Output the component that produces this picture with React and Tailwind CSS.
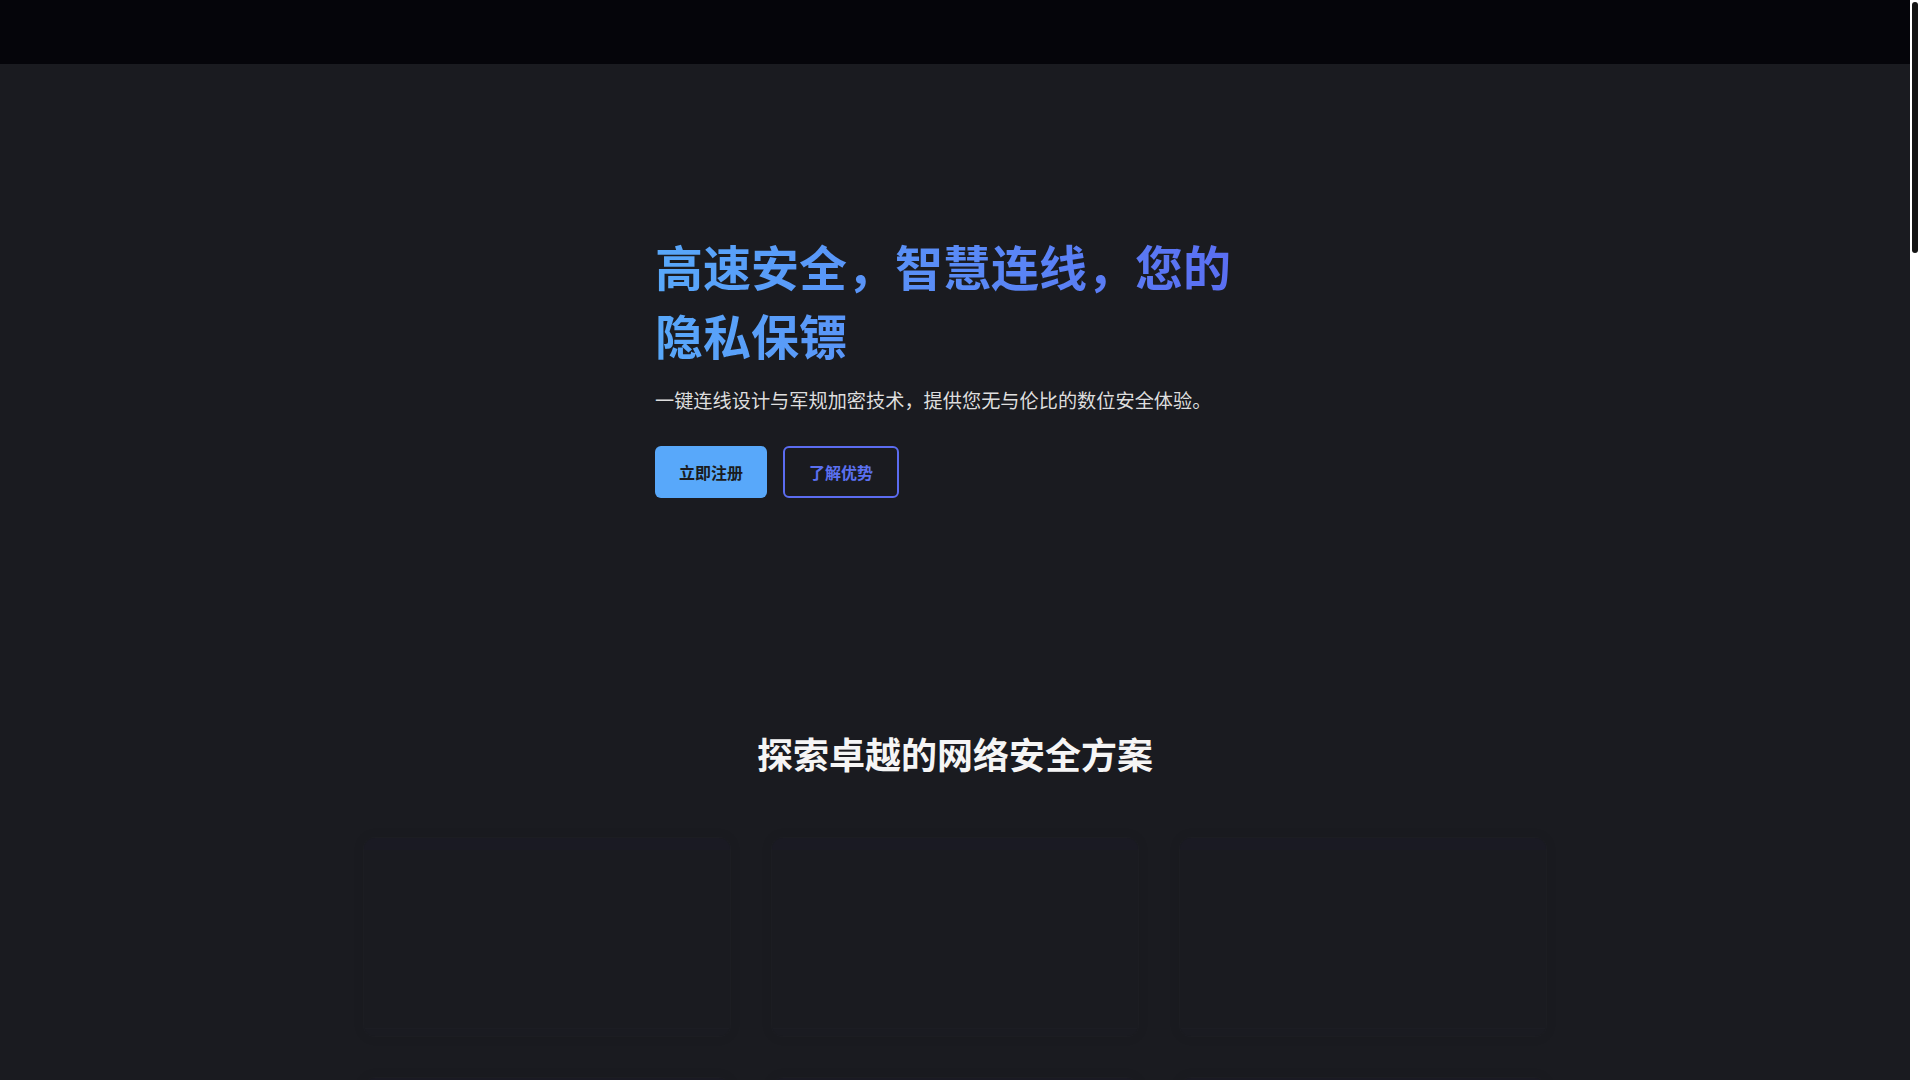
import { ShieldCheck, Zap, Globe, Lock, Server, Smartphone, Check } from 'lucide-react'

const features = [
  { icon: Zap, title: '极速连接', desc: '智能选路与专线加速，毫秒级响应，告别卡顿与延迟。' },
  { icon: ShieldCheck, title: '军规加密', desc: '采用 AES-256 加密协议，全程守护您的每一笔数据。' },
  { icon: Globe, title: '全球节点', desc: '覆盖 60+ 国家与地区，随时随地稳定访问全球内容。' },
  { icon: Lock, title: '零日志政策', desc: '我们从不记录您的浏览行为，隐私只属于您自己。' },
  { icon: Server, title: '专属服务器', desc: '高性能独享带宽，高峰时段依然畅快无阻。' },
  { icon: Smartphone, title: '多端同步', desc: '一个账号支持手机、电脑、平板等多台设备同时使用。' },
]

const plans = [
  { name: '月付', price: '¥39', period: '/月', perks: ['全部节点', '5 台设备', '7×24 客服'] },
  { name: '年付', price: '¥299', period: '/年', perks: ['全部节点', '10 台设备', '专属线路', '7×24 客服'] },
  { name: '季付', price: '¥99', period: '/季', perks: ['全部节点', '5 台设备', '7×24 客服'] },
]

const faqs = [
  { q: '如何开始使用？', a: '注册账号并选择套餐后，下载客户端即可一键连线。' },
  { q: '支持哪些设备？', a: '支持 Windows、macOS、iOS、Android 及 Linux。' },
  { q: '可以退款吗？', a: '首次购买 7 天内不满意可申请全额退款。' },
  { q: '是否记录我的数据？', a: '我们严格执行零日志政策，不保存任何浏览记录。' },
  { q: '遇到问题怎么办？', a: '7×24 小时在线客服随时为您解答。' },
]

function FeatureCard({ icon: Icon, title, desc }) {
  return (
    <div className="h-[200px] rounded-xl border border-white/[0.012] bg-[#1a1b20] shadow-[0_0_12px_rgba(0,0,0,0.08)] overflow-hidden flex flex-col">
      <div className="h-[12px] bg-[#1a1a23]" />
      {/* content fades in on scroll */}
      <div className="flex-1 px-6 py-5 invisible">
        <Icon className="w-8 h-8 text-[#58a6ff] mb-3" />
        <h3 className="text-xl font-bold text-white mb-2">{title}</h3>
        <p className="text-sm text-gray-400 leading-6">{desc}</p>
      </div>
      <div className="h-[8px] border-t border-white/[0.012] bg-[#1a1b21]" />
    </div>
  )
}

export default function App() {
  return (
    <div className="flex h-screen bg-[#1a1b20] font-['Noto_Sans_CJK_SC','Liberation_Sans',sans-serif]">
      <main className="flex-1 overflow-y-auto [scrollbar-width:none]">
        <header className="h-16 bg-[#05050a]" />

        <section className="pt-[167px] pb-[170px]">
          <div className="max-w-[600px] mx-auto">
            <h1 className="text-[48px] leading-[1.44] font-bold bg-gradient-to-r from-[#58a8fa] to-[#5a6cf2] bg-clip-text text-transparent mb-4">
              高速安全，智慧连线，您的隐私保镖
            </h1>
            <p className="text-[19.2px] leading-[1.6] text-[#dedede]">
              一键连线设计与军规加密技术，提供您无与伦比的数位安全体验。
            </p>
            <div className="flex items-start gap-4 mt-[30px]">
              <button className="px-6 py-3.5 text-base leading-6 font-bold rounded-md bg-[#58a8fa] text-[#1a1b20]">
                立即注册
              </button>
              <button className="px-6 py-3 text-base leading-6 font-bold rounded-md border-2 border-[#5b6cf0] text-[#5b70f0]">
                了解优势
              </button>
            </div>
          </div>
        </section>

        <section className="pt-[65px] pb-24">
          <h2 className="text-4xl font-bold text-[#f5f5f5] text-center mb-16">探索卓越的网络安全方案</h2>
          <div className="max-w-[1184px] mx-auto grid grid-cols-3 gap-10">
            {features.map((f) => (
              <FeatureCard key={f.title} {...f} />
            ))}
          </div>
        </section>

        <section className="py-24">
          <div className="max-w-[1184px] mx-auto grid grid-cols-4 gap-10 text-center invisible">
            {[['60+', '国家与地区'], ['3000+', '高速节点'], ['99.9%', '服务可用性'], ['500万+', '信赖用户']].map(([n, l]) => (
              <div key={l} className="py-10">
                <div className="text-5xl font-bold text-[#58a8fa]">{n}</div>
                <div className="mt-3 text-gray-400">{l}</div>
              </div>
            ))}
          </div>
        </section>

        <section className="py-24">
          <h2 className="text-4xl font-bold text-[#f5f5f5] text-center mb-16">选择适合您的方案</h2>
          <div className="max-w-[1184px] mx-auto grid grid-cols-3 gap-10 invisible">
            {plans.map((p) => (
              <div key={p.name} className="h-[520px] rounded-xl border border-white/5 p-8">
                <h3 className="text-2xl font-bold text-white">{p.name}</h3>
                <div className="mt-6 text-5xl font-bold text-white">
                  {p.price}
                  <span className="text-base text-gray-400">{p.period}</span>
                </div>
                <ul className="mt-8 space-y-4">
                  {p.perks.map((k) => (
                    <li key={k} className="flex items-center gap-2 text-gray-300">
                      <Check className="w-4 h-4 text-[#58a8fa]" />
                      {k}
                    </li>
                  ))}
                </ul>
              </div>
            ))}
          </div>
        </section>

        <section className="py-24">
          <h2 className="text-4xl font-bold text-[#f5f5f5] text-center mb-16">常见问题</h2>
          <div className="max-w-[800px] mx-auto space-y-4 invisible">
            {faqs.map((f) => (
              <div key={f.q} className="h-[96px] rounded-lg border border-white/5 px-6 py-5">
                <div className="font-bold text-white">{f.q}</div>
                <div className="mt-2 text-sm text-gray-400">{f.a}</div>
              </div>
            ))}
          </div>
        </section>

        <section className="py-32 text-center">
          <h2 className="text-4xl font-bold text-[#f5f5f5]">立即开启安全之旅</h2>
          <button className="mt-10 px-8 py-3.5 font-bold rounded-md bg-[#58a8fa] text-[#1a1b20]">立即注册</button>
        </section>

        <footer className="h-[300px] bg-[#05050a] flex items-center justify-center text-sm text-gray-500">
          © 2024 保留所有权利
        </footer>
      </main>

      {/* page scroll track */}
      <aside className="w-[10px] bg-white">
        <div className="mx-[2px] mt-[2px] h-[251px] rounded-[3px] bg-[#141414]" />
      </aside>
    </div>
  )
}
